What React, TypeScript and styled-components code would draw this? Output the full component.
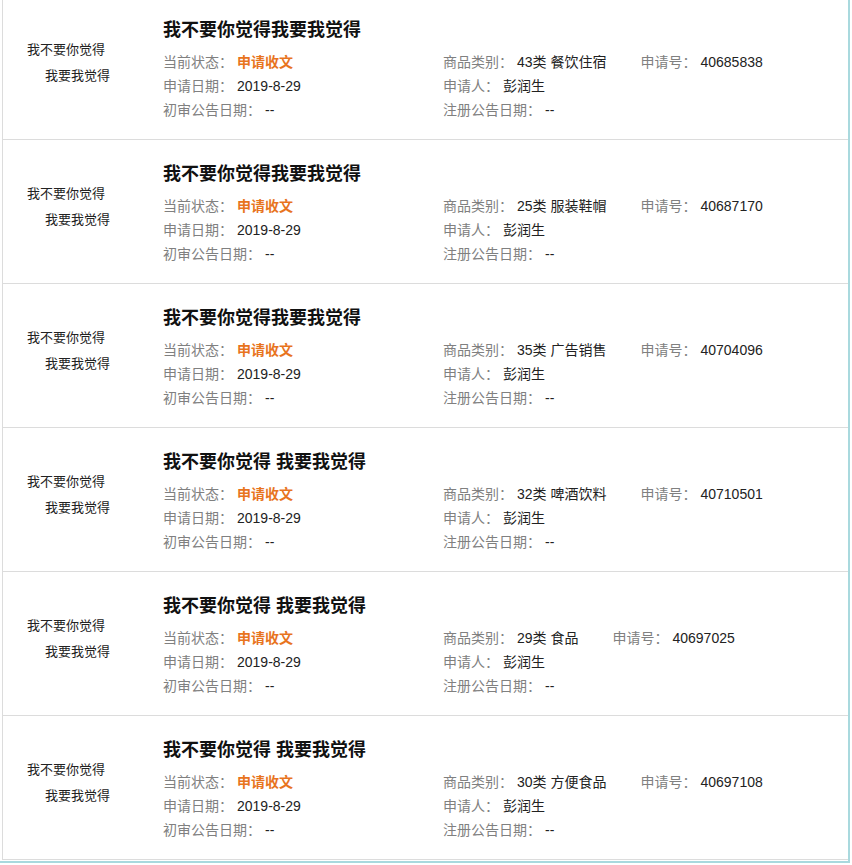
import styled, { createGlobalStyle } from "styled-components";

const GlobalStyle = createGlobalStyle`
  html, body {
    margin: 0;
    padding: 0;
    background: #ffffff;
  }
  body {
    font-family: "Liberation Sans", "Noto Sans CJK SC", sans-serif;
    color: #333;
  }
`;

const Frame = styled.div`
  width: 848px;
  height: 861px;
  overflow: hidden;
  border-right: 2px solid #a9d9de;
  border-bottom: 2px solid #a9d9de;
`;

const List = styled.div`
  margin-left: 2px;
  margin-top: -4px;
  border-left: 1px solid #dcdcdc;
`;

const Row = styled.div`
  display: flex;
  height: 143px;
  border-bottom: 1px solid #dcdcdc;
`;

const Side = styled.div`
  width: 160px;
  flex-shrink: 0;
  padding: 41px 0 0 24px;
  box-sizing: border-box;
  font-size: 13px;
  line-height: 26px;
  color: #222;
`;

const SideLine = styled.div<{ $indent?: number }>`
  padding-left: ${(p) => p.$indent ?? 0}px;
  white-space: nowrap;
`;

const Main = styled.div`
  padding-top: 22px;
`;

const Title = styled.div`
  font-size: 18px;
  line-height: 24px;
  font-weight: bold;
  color: #111;
  white-space: pre;
`;

const Info = styled.div`
  display: grid;
  grid-template-columns: 280px auto;
  grid-auto-rows: 24px;
  margin-top: 8px;
  font-size: 14px;
  line-height: 24px;
`;

const Cell = styled.div`
  display: flex;
  white-space: nowrap;
`;

const Field = styled.span<{ $gap?: number }>`
  margin-left: ${(p) => p.$gap ?? 0}px;
`;

const Label = styled.span`
  color: #808080;
  margin-right: 4px;
`;

const Value = styled.span<{ $status?: boolean }>`
  color: ${(p) => (p.$status ? "#e8741e" : "#222")};
  font-weight: ${(p) => (p.$status ? "bold" : "normal")};
`;

type Item = { title: string; category: string; no: string };

const items: Item[] = [
  { title: "我不要你觉得我要我觉得", category: "43类 餐饮住宿", no: "40685838" },
  { title: "我不要你觉得我要我觉得", category: "25类 服装鞋帽", no: "40687170" },
  { title: "我不要你觉得我要我觉得", category: "35类 广告销售", no: "40704096" },
  { title: "我不要你觉得 我要我觉得", category: "32类 啤酒饮料", no: "40710501" },
  { title: "我不要你觉得 我要我觉得", category: "29类 食品", no: "40697025" },
  { title: "我不要你觉得 我要我觉得", category: "30类 方便食品", no: "40697108" },
];

const App = () => (
  <>
    <GlobalStyle />
    <Frame>
      <List>
        {items.map((it, i) => (
          <Row key={i}>
            <Side>
              <SideLine>我不要你觉得</SideLine>
              <SideLine $indent={18}>我要我觉得</SideLine>
            </Side>
            <Main>
              <Title>{it.title}</Title>
              <Info>
                <Cell>
                  <Label>当前状态：</Label>
                  <Value $status>申请收文</Value>
                </Cell>
                <Cell>
                  <Field>
                    <Label>商品类别：</Label>
                    <Value>{it.category}</Value>
                  </Field>
                  <Field $gap={34}>
                    <Label>申请号：</Label>
                    <Value>{it.no}</Value>
                  </Field>
                </Cell>
                <Cell>
                  <Label>申请日期：</Label>
                  <Value>2019-8-29</Value>
                </Cell>
                <Cell>
                  <Label>申请人：</Label>
                  <Value>彭润生</Value>
                </Cell>
                <Cell>
                  <Label>初审公告日期：</Label>
                  <Value>--</Value>
                </Cell>
                <Cell>
                  <Label>注册公告日期：</Label>
                  <Value>--</Value>
                </Cell>
              </Info>
            </Main>
          </Row>
        ))}
      </List>
    </Frame>
  </>
);

export default App;
